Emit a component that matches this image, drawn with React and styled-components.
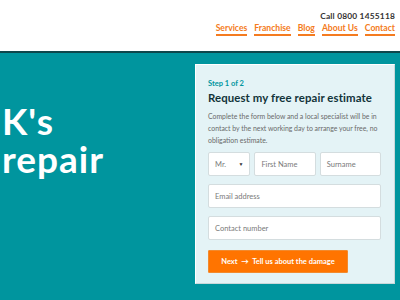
import React from 'react';
import styled, { createGlobalStyle } from 'styled-components';

const GlobalStyle = createGlobalStyle`
  html, body {
    margin: 0;
    padding: 0;
    width: 400px;
    height: 300px;
    overflow: hidden;
    font-family: Lato, "Noto Sans", sans-serif;
  }
`;

const Page = styled.div`
  width: 400px;
  height: 300px;
  display: flex;
  flex-direction: column;
`;

const Header = styled.header`
  height: 53px;
  flex-shrink: 0;
  background: #fff;
  border-bottom: 2px solid #0e474c;
  display: flex;
  flex-direction: column;
  align-items: flex-end;
  padding: 10px 5px 0 0;
  box-sizing: border-box;
`;

const Call = styled.div`
  font-size: 8.4px;
  font-weight: 700;
  color: #333;
  letter-spacing: 0.2px;
  line-height: 12px;
`;

const Nav = styled.nav`
  display: flex;
  gap: 7px;
  margin-top: 1px;
`;

const NavLink = styled.a`
  font-size: 8.6px;
  font-weight: 700;
  color: #f47b20;
  text-decoration: none;
  border-bottom: 2px solid #f47b20;
  line-height: 11px;
`;

const Hero = styled.main`
  flex: 1;
  background: #00959e;
  display: flex;
  justify-content: space-between;
  padding: 11px 5px 0 0;
`;

const Headline = styled.h1`
  margin: 38px 0 0 2px;
  font-size: 37px;
  line-height: 38px;
  letter-spacing: 1px;
  font-weight: 700;
  color: #fff;
`;

const Panel = styled.section`
  flex-shrink: 0;
  width: 200px;
  height: 220px;
  background: #e4f3f6;
  border: 1px solid #fff;
  border-right-color: #c9d8da;
  border-bottom-color: #c9d8da;
  padding: 14px 13px 0 12px;
  box-sizing: border-box;
`;

const Step = styled.div`
  font-size: 7.5px;
  font-weight: 700;
  color: #00959e;
  line-height: 10px;
`;

const Title = styled.h2`
  margin: 1px 0 4px;
  font-size: 11.4px;
  font-weight: 700;
  color: #12333a;
  line-height: 16px;
  letter-spacing: 0.1px;
  white-space: nowrap;
`;

const Intro = styled.p`
  margin: 0 0 6px;
  font-size: 6.9px;
  line-height: 12px;
  color: #6a6a6a;
`;

const Row = styled.div`
  display: flex;
  gap: 4px;
  margin-bottom: 8px;
`;

const Field = styled.div`
  flex: ${p => p.grow || 1};
  height: 24px;
  background: #fff;
  border: 1px solid #d4dddf;
  border-radius: 2px;
  box-sizing: border-box;
  display: flex;
  align-items: center;
  justify-content: space-between;
  padding: 0 6px;
  font-size: 7.5px;
  color: #7a7a7a;
`;

const Caret = styled.span`
  font-size: 5px;
  color: #333;
`;

const Button = styled.button`
  margin-top: 0;
  width: 140px;
  height: 23px;
  background: #ff7400;
  border: 1px solid #f28a2e;
  border-radius: 1px;
  color: #fff;
  font-family: inherit;
  font-size: 7.5px;
  font-weight: 700;
  padding: 0;
`;

export default function App() {
  return (
    <Page>
      <GlobalStyle />
      <Header>
        <Call>Call 0800 1455118</Call>
        <Nav>
          <NavLink>Services</NavLink>
          <NavLink>Franchise</NavLink>
          <NavLink>Blog</NavLink>
          <NavLink>About Us</NavLink>
          <NavLink>Contact</NavLink>
        </Nav>
      </Header>
      <Hero>
        <Headline>K's<br />repair</Headline>
        <Panel>
          <Step>Step 1 of 2</Step>
          <Title>Request my free repair estimate</Title>
          <Intro>
            Complete the form below and a local specialist will be in<br />
            contact by the next working day to arrange your free, no<br />
            obligation estimate.
          </Intro>
          <Row>
            <Field grow={0.6}>Mr. <Caret>▼</Caret></Field>
            <Field>First Name</Field>
            <Field>Surname</Field>
          </Row>
          <Row><Field>Email address</Field></Row>
          <Row><Field>Contact number</Field></Row>
          <Button>Next &nbsp;→&nbsp; Tell us about the damage</Button>
        </Panel>
      </Hero>
    </Page>
  );
}
